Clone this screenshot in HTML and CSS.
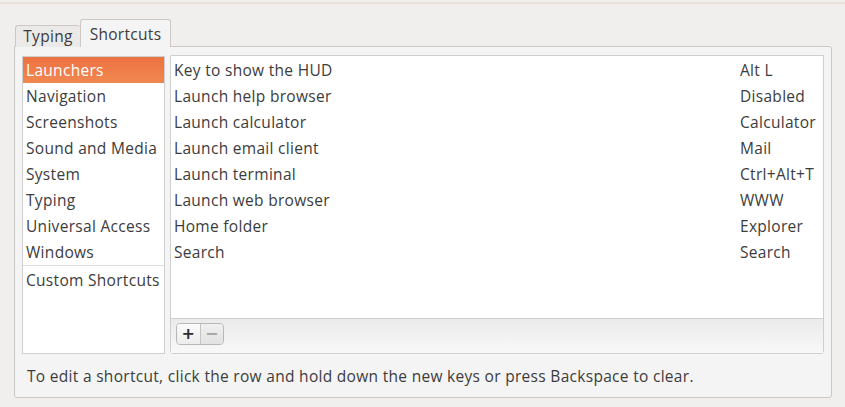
FILE: index.html
```html
<!DOCTYPE html>
<html>
<head>
<meta charset="utf-8">
<link rel="stylesheet" href="styles.css">
</head>
<body>
<div class="topline"></div>
<div class="wrap">
  <div class="tabs">
    <div class="tab inactive">Typing</div>
    <div class="tab active">Shortcuts</div>
  </div>
  <div class="notebook">
    <div class="content">
      <div class="cats">
        <div class="cat selected">Launchers</div>
        <div class="cat">Navigation</div>
        <div class="cat">Screenshots</div>
        <div class="cat">Sound and Media</div>
        <div class="cat">System</div>
        <div class="cat">Typing</div>
        <div class="cat">Universal Access</div>
        <div class="cat">Windows</div>
        <div class="sep"></div>
        <div class="cat">Custom Shortcuts</div>
      </div>
      <div class="panel">
        <div class="list">
          <div class="row"><span>Key to show the HUD</span><span class="key">Alt L</span></div>
          <div class="row"><span>Launch help browser</span><span class="key">Disabled</span></div>
          <div class="row"><span>Launch calculator</span><span class="key">Calculator</span></div>
          <div class="row"><span>Launch email client</span><span class="key">Mail</span></div>
          <div class="row"><span>Launch terminal</span><span class="key">Ctrl+Alt+T</span></div>
          <div class="row"><span>Launch web browser</span><span class="key">WWW</span></div>
          <div class="row"><span>Home folder</span><span class="key">Explorer</span></div>
          <div class="row"><span>Search</span><span class="key">Search</span></div>
        </div>
        <div class="toolbar">
          <div class="btns">
            <div class="btn plus">+</div>
            <div class="btn minus">−</div>
          </div>
        </div>
      </div>
    </div>
    <div class="hint">To edit a shortcut, click the row and hold down the new keys or press Backspace to clear.</div>
  </div>
</div>
</body>
</html>
```

FILE: styles.css
```css
html, body {
  margin: 0;
  padding: 0;
}
body {
  width: 845px;
  height: 407px;
  background: #f0efee;
  font-family: "Open Sans", "Noto Sans", sans-serif;
  font-size: 15.5px;
  letter-spacing: 0.3px;
  color: #3c3c3c;
  overflow: hidden;
}
.topline {
  height: 2px;
  margin-top: 2px;
  background: #e9e2da;
}
.wrap {
  padding: 16px 14px 0 14px;
}
.tabs {
  display: flex;
  align-items: flex-end;
  height: 27px;
  margin-bottom: -1px;
  position: relative;
  z-index: 1;
}
.tab {
  box-sizing: border-box;
  border: 1px solid #cdc8c3;
  border-bottom: none;
  border-radius: 3px 3px 0 0;
  display: flex;
  align-items: center;
  justify-content: center;
}
.tab.inactive {
  margin-left: 1px;
  width: 65px;
  height: 22px;
  background: #ebeae8;
  border-right: none;
  padding-bottom: 2px;
}
.tab.active {
  width: 91px;
  height: 28px;
  background: #f4f4f4;
  padding-bottom: 0;
}
.notebook {
  box-sizing: border-box;
  height: 352px;
  width: 818px;
  background: #f4f4f4;
  border: 1px solid #cdc8c3;
  border-radius: 0 3px 3px 3px;
  padding: 9px 7px 0 7px;
}
.content {
  display: flex;
  gap: 5px;
  height: 298px;
}
.cats {
  box-sizing: border-box;
  width: 143px;
  background: #fff;
  border: 1px solid #cfcfcf;
}
.cat {
  height: 26px;
  line-height: 26px;
  padding-left: 3px;
  white-space: nowrap;
}
.cat.selected {
  background: linear-gradient(#ec7241, #f08850);
  color: #fff;
}
.sep {
  height: 1px;
  background: #dcdcdc;
  margin: 0 0 1px 0;
}
.panel {
  box-sizing: border-box;
  flex: 1;
  border: 1px solid #cfcfcf;
  border-radius: 0 0 3px 3px;
  display: flex;
  flex-direction: column;
  margin-top: -1px;
  height: 299px;
}
.list {
  flex: 1;
  background: #fff;
  border-bottom: 1px solid #cfcfcf;
  padding-top: 1px;
}
.row {
  height: 26px;
  line-height: 26px;
  display: flex;
  padding-left: 3px;
  white-space: nowrap;
}
.row span:first-child {
  flex: 1;
}
.key {
  width: 83px;
}
.toolbar {
  height: 34px;
  background: linear-gradient(#ebebeb, #f8f8f8);
  padding: 4px 0 0 5px;
  box-sizing: border-box;
}
.btns {
  display: flex;
  width: 48px;
  height: 22px;
  box-sizing: border-box;
  border: 1px solid #b8b8b8;
  border-radius: 4px;
  overflow: hidden;
  letter-spacing: 0;
}
.btn {
  flex: 1;
  display: flex;
  align-items: center;
  justify-content: center;
  font-family: "DejaVu Sans", sans-serif;
  font-size: 16px;
  font-weight: bold;
  line-height: 20px;
}
.plus {
  background: linear-gradient(#fbfbfb, #ececec);
  border-right: 1px solid #c4c4c4;
  color: #2c2c2c;
}
.minus {
  background: linear-gradient(#f0f0f0, #e2e2e2);
  color: #a8a8a8;
}
.hint {
  padding-left: 5px;
  margin-top: 12px;
  line-height: 20px;
  white-space: nowrap;
}
```
